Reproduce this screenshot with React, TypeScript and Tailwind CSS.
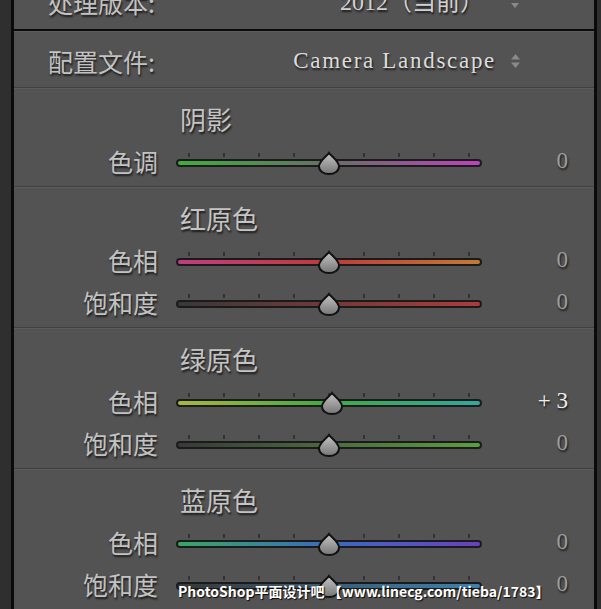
import React from "react";

type Stop = [number, string];

function Slider({ id, stops, pos }: { id: string; stops: Stop[]; pos: number }) {
  const ticks = Array.from({ length: 9 }, (_, i) => 13 + i * 35);
  return (
    <svg width="306" height="24" viewBox="0 0 306 24" className="block shrink-0">
      <defs>
        <linearGradient id={`g-${id}`} x1="0" y1="0" x2="1" y2="0">
          {stops.map(([o, c], i) => (
            <stop key={i} offset={o} stopColor={c} />
          ))}
        </linearGradient>
        <linearGradient id={`t-${id}`} x1="0" y1="0" x2="0" y2="1">
          <stop offset="0" stopColor="#c4c4c4" />
          <stop offset="1" stopColor="#767676" />
        </linearGradient>
      </defs>
      {ticks.map((x) => (
        <line key={x} x1={x} y1={2} x2={x} y2={6} stroke="#2b2b2b" strokeWidth={1.6} />
      ))}
      <rect x={1} y={9} width={304} height={6} rx={3} fill={`url(#g-${id})`} stroke="#1b1b1b" strokeWidth={2} />
      <g transform={`translate(${pos - 12},0)`}>
        <path
          d="M12 2 C13.5 4.5 22 10 22 15.5 C22 20 17.5 23 12 23 C6.5 23 2 20 2 15.5 C2 10 10.5 4.5 12 2 Z"
          fill={`url(#t-${id})`}
          stroke="#111"
          strokeWidth={2}
        />
      </g>
    </svg>
  );
}

const cjk = "font-['Noto_Sans_CJK_SC','Noto_Sans',sans-serif]";
const serif = "font-['Liberation_Serif','Noto_Sans_CJK_SC',serif]";
const shadow = "[text-shadow:1px_2px_2px_rgba(0,0,0,0.7)]";

function Row({
  label,
  id,
  stops,
  pos = 153,
  value = "0",
  bright = false,
}: {
  label: string;
  id: string;
  stops: Stop[];
  pos?: number;
  value?: string;
  bright?: boolean;
}) {
  return (
    <div className="flex h-[42px] items-center">
      <div className={`w-[144px] text-right text-[25px] leading-[30px] text-[#c2c2c2] ${cjk} ${shadow}`}>{label}</div>
      <div className="ml-[18px] mt-[4px]">
        <Slider id={id} stops={stops} pos={pos} />
      </div>
      <div
        className={`w-[86px] text-right text-[23px] leading-[30px] ${serif} ${shadow} ${
          bright ? "text-[#ececec]" : "text-[#9d9d9d]"
        }`}
      >
        {value}
      </div>
    </div>
  );
}

function Section({ title, children }: { title: string; children: React.ReactNode }) {
  return (
    <div className="border-t border-[#404040] shadow-[inset_0_1px_0_#5c5c5c] pt-[14px] pb-[4px]">
      <div className={`h-[34px] pl-[166px] text-[26px] leading-[34px] text-[#c4c4c4] ${cjk} ${shadow}`}>{title}</div>
      <div className="mt-[4px]">{children}</div>
    </div>
  );
}

export default function App() {
  return (
    <div className="relative flex h-[609px] w-[601px] overflow-hidden bg-[#2e2e2e]">
      <div className="w-[11px] bg-[#2f2f2f]" />
      <div className="w-[3px] bg-[#0b0b0b]" />
      <div className="flex w-[580px] flex-col bg-[#535353]">
        {/* process version */}
        <div className="flex h-[30px] items-start overflow-hidden">
          <div className={`-mt-[11px] pl-[34px] text-[25px] leading-[26px] text-[#c2c2c2] ${cjk} ${shadow}`}>处理版本:</div>
          <div className={`-mt-[11px] ml-auto text-[24px] leading-[26px] text-[#d0d0d0] ${serif} ${shadow}`}>
            2012（当前）
          </div>
          <svg width="8" height="6" viewBox="0 0 8 6" className="ml-[27px] mr-[75px] mt-[3px] shrink-0">
            <path d="M0 0 L8 0 L4 5 Z" fill="#8a8a8a" />
          </svg>
        </div>
        <div className="h-[2px] bg-[#0b0b0b]" />
        {/* profile */}
        <div className="flex h-[58px] items-center pt-[4px] shadow-[inset_0_1px_0_#5c5c5c]">
          <div className={`pl-[34px] text-[25px] leading-[30px] text-[#c2c2c2] ${cjk} ${shadow}`}>配置文件:</div>
          <div className={`ml-auto text-[23px] leading-[30px] tracking-[1.7px] text-[#dcdcdc] ${serif} ${shadow}`}>
            Camera Landscape
          </div>
          <svg width="11" height="16" viewBox="0 0 11 16" className="ml-[14px] mr-[73px] shrink-0">
            <path d="M1 6.5 L10 6.5 L5.5 1 Z" fill="#8a8a8a" />
            <path d="M1 9.5 L10 9.5 L5.5 15 Z" fill="#8a8a8a" />
          </svg>
        </div>

        <Section title="阴影">
          <Row
            label="色调"
            id="tint"
            stops={[
              [0, "#3fae3f"],
              [0.5, "#667066"],
              [1, "#c040c0"],
            ]}
          />
        </Section>

        <Section title="红原色">
          <Row
            label="色相"
            id="rh"
            stops={[
              [0, "#c23c82"],
              [0.5, "#c23a3a"],
              [1, "#c27a34"],
            ]}
          />
          <Row
            label="饱和度"
            id="rs"
            stops={[
              [0, "#383838"],
              [1, "#b03a3a"],
            ]}
          />
        </Section>

        <Section title="绿原色">
          <Row
            label="色相"
            id="gh"
            pos={156}
            value="+ 3"
            bright
            stops={[
              [0, "#a8b83c"],
              [0.5, "#40aa44"],
              [1, "#30a8a0"],
            ]}
          />
          <Row
            label="饱和度"
            id="gs"
            stops={[
              [0, "#383838"],
              [1, "#5aa040"],
            ]}
          />
        </Section>

        <Section title="蓝原色">
          <Row
            label="色相"
            id="bh"
            stops={[
              [0, "#38a862"],
              [0.5, "#3a6ac2"],
              [1, "#6a40c0"],
            ]}
          />
          <Row
            label="饱和度"
            id="bs"
            stops={[
              [0, "#383838"],
              [1, "#3c82b2"],
            ]}
          />
        </Section>
      </div>
      <div className="w-[3px] bg-[#0b0b0b]" />
      <div className="w-[4px] bg-[#2f2f2f]" />

      <div
        className={`absolute left-[178px] top-[581px] whitespace-nowrap text-[14px] font-bold leading-[20px] text-white ${cjk} [text-shadow:1px_1px_1px_rgba(0,0,0,0.9)]`}
      >
        PhotoShop平面设计吧 【www.linecg.com/tieba/1783】
      </div>
    </div>
  );
}
